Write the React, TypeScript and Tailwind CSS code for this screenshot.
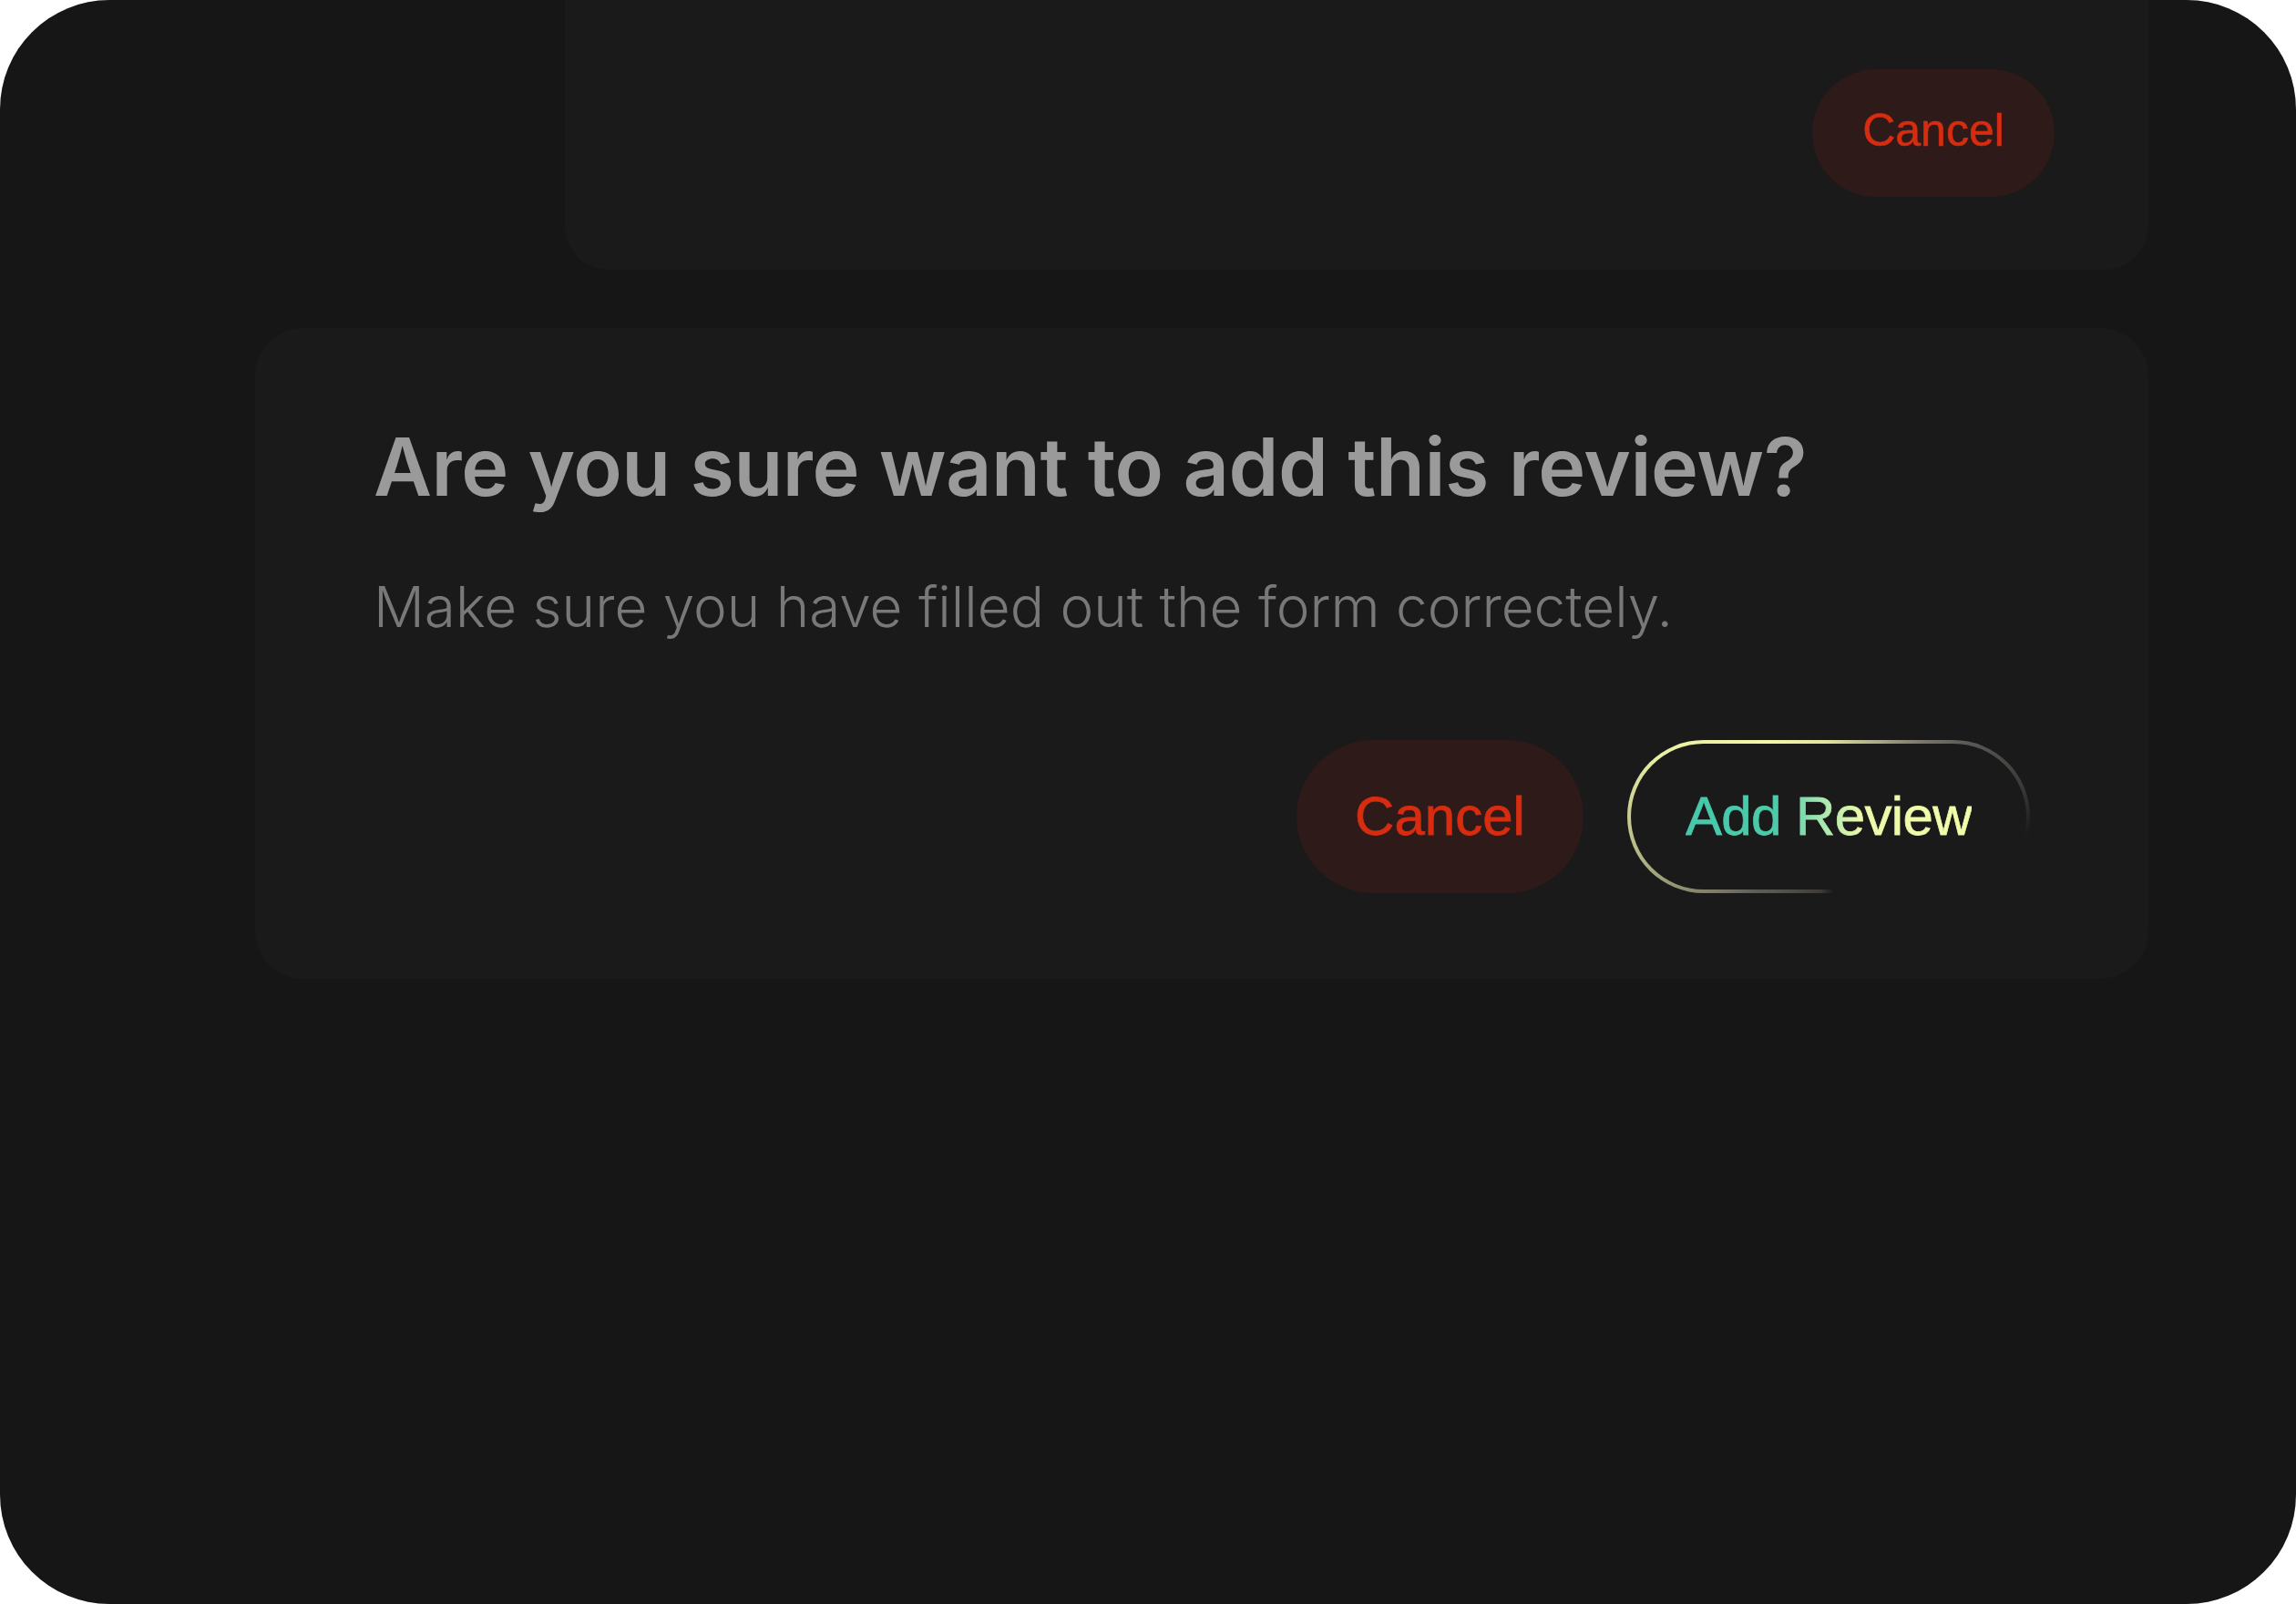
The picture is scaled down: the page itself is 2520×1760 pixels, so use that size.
import React from 'react';

const ringBg =
  '[background:linear-gradient(#1a1a1a,#1a1a1a)_padding-box,conic-gradient(from_0deg,#dfe39c_0deg,#a9a88a_35deg,#5c5a57_62deg,#3a3836_82deg,transparent_96deg,transparent_176deg,#3e3b39_186deg,#5f5d5a_225deg,#b4b585_258deg,#eaf0a4_290deg,#f1f6a8_320deg,#dfe39c_360deg)_border-box]';

const App: React.FC = () => {
  return (
    <div className="w-[2520px] h-[1760px] bg-white">
      <div className="w-full h-full rounded-[120px] bg-[#161616] overflow-hidden flex flex-col items-end pr-[162px]">
        {/* card peeking in from the top */}
        <div className="w-[1738px] h-[296px] bg-[#1a1a1a] rounded-b-[48px] flex justify-end items-end pr-[103px] pb-[80px]">
          <button className="h-[140px] w-[266px] pb-[6px] rounded-full bg-[#2d1a19] text-[#d62c10] text-[50px] [-webkit-text-stroke:0.6px_#d62c10] font-['Liberation_Sans',Arial,sans-serif]">
            Cancel
          </button>
        </div>

        {/* confirm dialog */}
        <div className="mt-[64px] w-[2078px] bg-[#1a1a1a] rounded-[52px] pt-[97px] px-[130px] pb-[94px] flex flex-col">
          <h2 className="text-[88px] leading-[110px] font-semibold tracking-[-0.005em] text-[#9a9a9a] font-['Inter',sans-serif]">
            Are you sure want to add this review?
          </h2>
          <p className="mt-[59px] text-[62px] leading-[80px] font-light text-[#787878] font-['Inter',sans-serif]">
            Make sure you have filled out the form correctely.
          </p>
          <div className="mt-[106px] flex justify-end gap-[48px]">
            <button className="h-[168px] w-[315px] rounded-full bg-[#2d1a19] text-[#d62c10] text-[60px] [-webkit-text-stroke:0.8px_#d62c10] font-['Liberation_Sans',Arial,sans-serif]">
              Cancel
            </button>
            <button className={`h-[168px] w-[442px] rounded-full border-[4px] border-transparent ${ringBg} flex items-center justify-center`}>
              <span className="text-[60px] tracking-[-0.01em] [-webkit-text-stroke:0.8px_transparent] font-['Liberation_Sans',Arial,sans-serif] bg-[linear-gradient(90deg,#45c8ab_0%,#4fcaa8_32%,#a8e8b0_48%,#eef9ac_62%,#f3fcaa_100%)] bg-clip-text text-transparent">
                Add Review
              </span>
            </button>
          </div>
        </div>
      </div>
    </div>
  );
};

export default App;
